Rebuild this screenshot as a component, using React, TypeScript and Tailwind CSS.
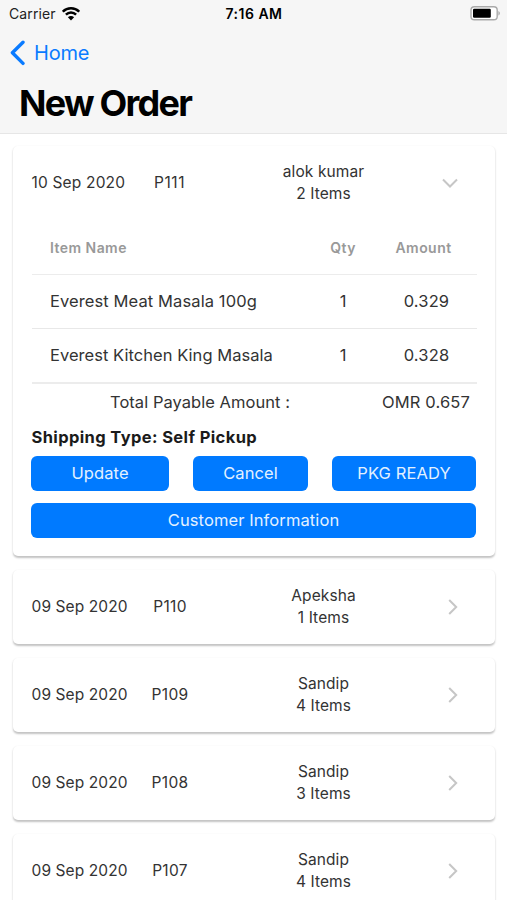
import React from "react";

type Order = { date: string; id: string; name: string; items: string };

const orders: Order[] = [
  { date: "09 Sep 2020", id: "P110", name: "Apeksha", items: "1 Items" },
  { date: "09 Sep 2020", id: "P109", name: "Sandip", items: "4 Items" },
  { date: "09 Sep 2020", id: "P108", name: "Sandip", items: "3 Items" },
  { date: "09 Sep 2020", id: "P107", name: "Sandip", items: "4 Items" },
];

const lines = [
  { name: "Everest Meat Masala 100g", qty: "1", amount: "0.329" },
  { name: "Everest Kitchen King Masala", qty: "1", amount: "0.328" },
];

function StatusBar() {
  return (
    <div className="grid h-7 grid-cols-3 items-center pl-[9px] pr-[7px] text-[14px] leading-7">
      <div className="flex items-center gap-[6px] text-[#222]">
        <span className="tracking-[0.1px]">Carrier</span>
        <svg width="18" height="14" viewBox="0 0 18 14" fill="none" stroke="#000" strokeWidth="2.5" className="-mt-px">
          <path d="M.8 4.7C5.3.2 12.7.2 17.2 4.7" />
          <path d="M3.9 7.7c2.9-2.9 7.3-2.9 10.2 0" />
          <path d="M9 13.4 5.9 10.2c1.7-1.7 4.5-1.7 6.2 0z" fill="#000" stroke="none" />
        </svg>
      </div>
      <div className="pr-[1px] text-center text-[14px] font-semibold tracking-[0.5px] text-black">7:16 AM</div>
      <div className="flex justify-end">
        <svg width="30" height="15" viewBox="0 0 30 15" className="-mt-px">
          <rect x="1" y=".8" width="26.2" height="13" rx="3.4" fill="#fff" stroke="#aaa" strokeWidth="1.4" />
          <rect x="3" y="2.8" width="17.8" height="9" rx="1.2" fill="#000" />
          <path d="M28.4 5v4.6c1.9-.8 1.9-3.8 0-4.6z" fill="#aaa" />
        </svg>
      </div>
    </div>
  );
}

function Summary({ order, open = false }: { order: Order; open?: boolean }) {
  return (
    <div className="flex h-[74px] items-center text-[15.5px] leading-[22px] tracking-[0.1px] text-[#333]">
      <div className={"whitespace-nowrap " + (open ? "w-[108px] tracking-[0.18px]" : "w-[109px]")}>{order.date}</div>
      <div className={"text-center " + (open ? "w-[60px] tracking-[0.6px]" : "w-[59px] tracking-[0.3px]")}>{order.id}</div>
      <div className="ml-[52px] w-[144px] text-center">
        <div>{order.name}</div>
        <div>{order.items}</div>
      </div>
      <div className="ml-auto flex w-[52px] justify-center">
        {open ? (
          <svg className="mr-[2px]" width="18" height="18" viewBox="0 0 18 18" fill="none" stroke="#c6c6c6" strokeWidth="2">
            <path d="m2 5.5 7 7 7-7" />
          </svg>
        ) : (
          <svg className="ml-1" width="18" height="18" viewBox="0 0 18 18" fill="none" stroke="#c6c6c6" strokeWidth="2">
            <path d="m5.2 2 7 7-7 7" />
          </svg>
        )}
      </div>
    </div>
  );
}

function Card({ children, className = "" }: { children: React.ReactNode; className?: string }) {
  return (
    <section
      className={
        "shrink-0 rounded-[5px] bg-white pl-[18.5px] pr-[18.5px] shadow-[0_1.5px_2px_rgba(0,0,0,0.24)] " + className
      }
    >
      {children}
    </section>
  );
}

function Button({ label, className }: { label: string; className: string }) {
  return (
    <button className={"h-[35px] rounded-[6px] bg-[#007aff] text-[16.5px] leading-[35px] tracking-[0.1px] text-[#e3f1ff] " + className}>
      {label}
    </button>
  );
}

export default function App() {
  return (
    <div className="flex h-[900px] w-[507px] flex-col overflow-hidden bg-white font-['Inter',sans-serif]">
      <header className="h-[134px] shrink-0 border-b border-[#e6e6e6] bg-[#f6f6f6]">
        <StatusBar />
        <div className="flex h-[49px] items-center pl-[10px] text-[#0a7bff]">
          <svg width="16" height="26" viewBox="0 0 16 26" fill="none" stroke="#0a7bff" strokeWidth="3.4" strokeLinecap="round" strokeLinejoin="round">
            <path d="M13 2.2 2.4 12.8 13 23.4" />
          </svg>
          <span className="ml-2 text-[20px] tracking-[-0.2px]">Home</span>
        </div>
        <h1 className="pl-[19px] text-[36px] font-bold leading-[52px] tracking-[-1.75px] text-black">New Order</h1>
      </header>

      <main className="flex flex-col gap-[14px] pl-[13px] pr-3 pt-3">
        <Card className="h-[410px]">
          <Summary open order={{ date: "10 Sep 2020", id: "P111", name: "alok kumar", items: "2 Items" }} />
          <div className="grid h-[55px] grid-cols-[280px_63px_1fr] items-center border-b border-[#ececec] text-center text-[14px] font-semibold tracking-[0.45px] text-[#999]">
            <div className="pl-[18.5px] text-left">Item Name</div>
            <div>Qty</div>
            <div className="pr-[4px]">Amount</div>
          </div>
          {lines.map((line, i) => (
            <div
              key={line.name}
              className={
                "grid grid-cols-[280px_63px_1fr] items-center text-center text-[16.5px] text-[#333] " +
                (i === 0 ? "h-[54px] border-b border-[#e8e8e8]" : "h-[55px] border-b-2 border-[#ececec]")
              }
            >
              <div className={"whitespace-nowrap pl-[18.5px] text-left " + (i === 0 ? "tracking-[0.1px]" : "tracking-[0.04px]")}>
                {line.name}
              </div>
              <div>{line.qty}</div>
              <div className="pl-[2px] tracking-[0.15px]">{line.amount}</div>
            </div>
          ))}
          <div className="flex h-[36px] items-center justify-between pl-[78.5px] pr-[6.5px] text-[16.5px] text-[#333]">
            <span className="tracking-[0.04px]">Total Payable Amount :</span>
            <span className="tracking-[0.15px]">OMR 0.657</span>
          </div>
          <div className="h-[36px] text-[16.5px] font-bold leading-[35px] tracking-[0.38px] text-[#1b1b1b]">
            Shipping Type: Self Pickup
          </div>
          <div className="-ml-[0.5px] mr-[0.5px]">
            <div className="flex justify-between">
              <Button label="Update" className="w-[138px]" />
              <Button label="Cancel" className="w-[115px]" />
              <Button label="PKG READY" className="w-[144px]" />
            </div>
            <Button label="Customer Information" className="mt-3 w-full" />
          </div>
        </Card>

        {orders.map((order) => (
          <Card key={order.id}>
            <Summary order={order} />
          </Card>
        ))}
      </main>
    </div>
  );
}
